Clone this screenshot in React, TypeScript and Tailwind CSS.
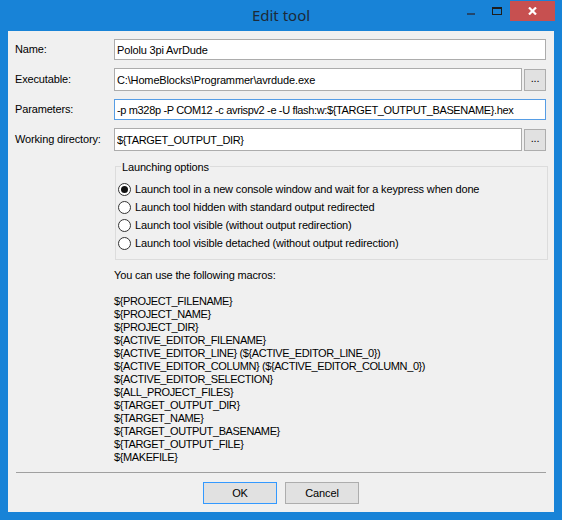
import React from 'react';

const macros = [
  '${PROJECT_FILENAME}',
  '${PROJECT_NAME}',
  '${PROJECT_DIR}',
  '${ACTIVE_EDITOR_FILENAME}',
  '${ACTIVE_EDITOR_LINE} (${ACTIVE_EDITOR_LINE_0})',
  '${ACTIVE_EDITOR_COLUMN} (${ACTIVE_EDITOR_COLUMN_0})',
  '${ACTIVE_EDITOR_SELECTION}',
  '${ALL_PROJECT_FILES}',
  '${TARGET_OUTPUT_DIR}',
  '${TARGET_NAME}',
  '${TARGET_OUTPUT_BASENAME}',
  '${TARGET_OUTPUT_FILE}',
  '${MAKEFILE}',
];

const options = [
  'Launch tool in a new console window and wait for a keypress when done',
  'Launch tool hidden with standard output redirected',
  'Launch tool visible (without output redirection)',
  'Launch tool visible detached (without output redirection)',
];

function TextBox({ value, h, focused, tight }: { value: string; h: string; focused?: boolean; tight?: boolean }) {
  return (
    <input
      readOnly
      value={value}
      className={`min-w-0 flex-1 ${h} border bg-white px-[2px] text-[11px] text-black outline-none ${
        focused ? 'border-[#569de5]' : 'border-[#acacac]'
      } ${tight ? 'tracking-[-0.35px]' : 'tracking-[-0.15px]'}`}
    />
  );
}

function BrowseButton() {
  return (
    <button className="flex h-[22px] w-[22px] items-center justify-center border border-[#adadad] bg-[#e1e1e1] pb-[2px] text-[11px] leading-none text-black">
      ...
    </button>
  );
}

function Radio({ label, checked }: { label: string; checked?: boolean }) {
  return (
    <div className="flex h-[18px] items-center gap-[4px]">
      <span className="flex h-[13px] w-[13px] items-center justify-center rounded-full border border-[#333] bg-white">
        {checked && <span className="h-[7px] w-[7px] rounded-full bg-[#111]" />}
      </span>
      <span>{label}</span>
    </div>
  );
}

export default function App() {
  return (
    <div
      className="flex h-[520px] w-[562px] flex-col bg-[#1883d7] text-[11px] tracking-[-0.15px] text-black"
      style={{ fontFamily: '"Liberation Sans", Arial, sans-serif' }}
    >
      {/* title bar */}
      <div className="grid h-[31px] grid-cols-[1fr_auto_1fr]">
        <div />
        <div
          className="flex items-center pb-[1px] text-[15px] tracking-normal text-[#1c2a38]"
          style={{ fontFamily: '"Noto Sans", sans-serif' }}
        >
          Edit tool
        </div>
        <div className="flex items-start justify-end pr-[7px] pt-[1px]">
          <div className="flex h-[20px] w-[26px] items-start justify-center">
            <span className="mt-[12px] h-[2px] w-[8px] bg-[#23466b]" />
          </div>
          <div className="flex h-[20px] w-[26px] items-start justify-center">
            <span className="mt-[6px] h-[8px] w-[10px] border border-t-2 border-[#1d1d1d]" />
          </div>
          <div className="flex h-[20px] w-[45px] items-center justify-center bg-[#c75050]">
            <svg width="9" height="8" viewBox="0 0 9 8">
              <path d="M1 0.5 L8 7.5 M8 0.5 L1 7.5" stroke="#fff" strokeWidth="2.2" />
            </svg>
          </div>
        </div>
      </div>

      {/* client area */}
      <div className="mx-[8px] mb-[8px] flex flex-1 flex-col bg-[#f0f0f0] pt-[8px]">
        <div className="grid grid-cols-[99px_1fr] gap-y-[8px] pl-[7px] pr-[8px]">
          <div className="flex items-center">Name:</div>
          <div className="flex">
            <TextBox value="Pololu 3pi AvrDude" h="h-[21px]" />
          </div>

          <div className="flex items-center">Executable:</div>
          <div className="flex items-center gap-[2px]">
            <TextBox value="C:\HomeBlocks\Programmer\avrdude.exe" h="h-[23px]" />
            <BrowseButton />
          </div>

          <div className="flex items-center">Parameters:</div>
          <div className="flex">
            <TextBox
              value="-p m328p -P COM12 -c avrispv2 -e -U flash:w:${TARGET_OUTPUT_BASENAME}.hex"
              h="h-[21px]"
              focused
              tight
            />
          </div>

          <div className="flex items-center">Working directory:</div>
          <div className="flex items-center gap-[2px]">
            <TextBox value="${TARGET_OUTPUT_DIR}" h="h-[23px]" tight />
            <BrowseButton />
          </div>
        </div>

        <div className="relative ml-[107px] mr-[6px] mt-[15px] border border-[#dcdcdc] pb-[7px] pl-[2px] pt-[13px]">
          <span className="absolute -top-[8px] left-[5px] bg-[#f0f0f0] px-[1px]">Launching options</span>
          {options.map((o, i) => (
            <Radio key={o} label={o} checked={i === 0} />
          ))}
        </div>

        <div className="ml-[106px] mt-[9px] leading-[13px]">
          <div>You can use the following macros:</div>
          <div className="h-[13px]" />
          {macros.map((m) => (
            <div key={m} className="tracking-[-0.4px]">
              {m}
            </div>
          ))}
        </div>

        <div className="mx-[8px] mt-[8px] h-px bg-[#a0a0a0]" />

        <div className="mt-[9px] flex justify-center gap-[8px]">
          <button className="h-[22px] w-[74px] border border-[#3399ff] bg-[#e1e1e1] text-[11px]">OK</button>
          <button className="h-[22px] w-[74px] border border-[#adadad] bg-[#e1e1e1] text-[11px]">Cancel</button>
        </div>
      </div>
    </div>
  );
}
